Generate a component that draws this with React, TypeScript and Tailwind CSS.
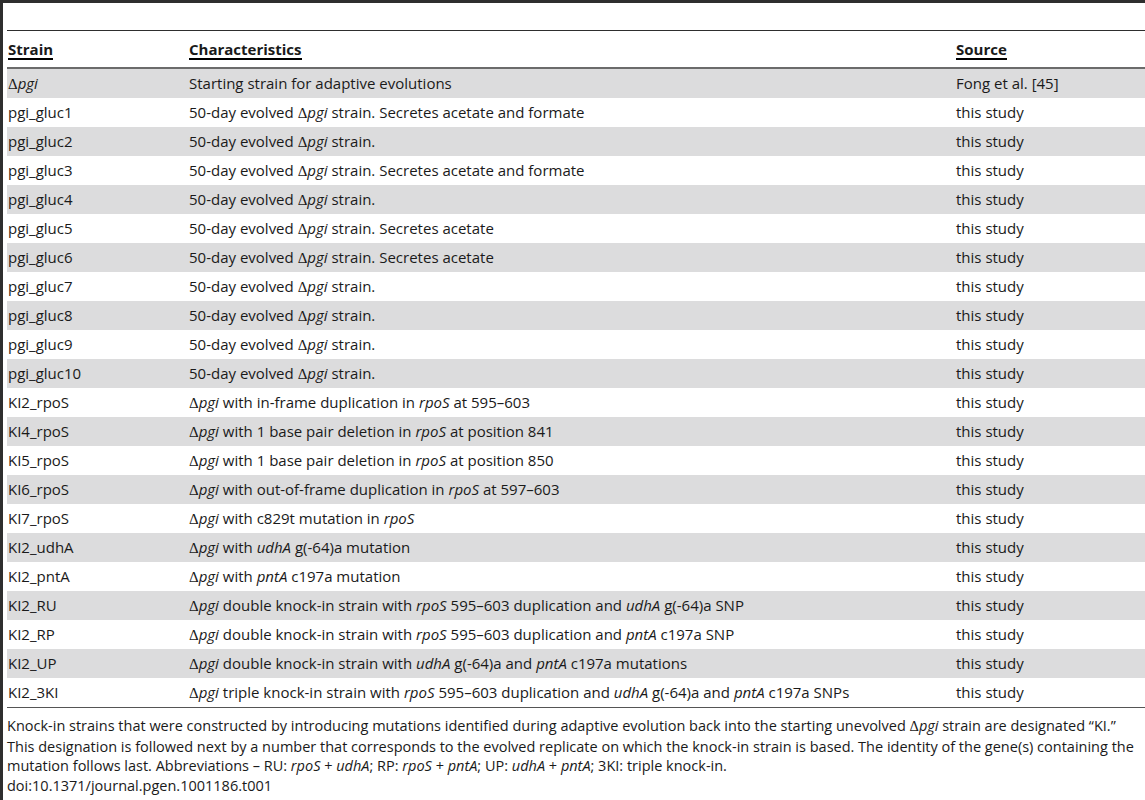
import type { ReactNode } from 'react';

const D = () => <span style={{ fontFamily: '"Liberation Serif", serif' }}>Δ</span>;
const Pgi = () => (
  <>
    <D />
    <i>pgi</i>
  </>
);

type Row = { strain: ReactNode; text: ReactNode; source: string };

const evolved = (extra?: string) => (
  <>
    50-day evolved <Pgi /> strain.{extra ? ` ${extra}` : ''}
  </>
);

const rows: Row[] = [
  { strain: <Pgi />, text: 'Starting strain for adaptive evolutions', source: 'Fong et al. [45]' },
  { strain: 'pgi_gluc1', text: evolved('Secretes acetate and formate'), source: 'this study' },
  { strain: 'pgi_gluc2', text: evolved(), source: 'this study' },
  { strain: 'pgi_gluc3', text: evolved('Secretes acetate and formate'), source: 'this study' },
  { strain: 'pgi_gluc4', text: evolved(), source: 'this study' },
  { strain: 'pgi_gluc5', text: evolved('Secretes acetate'), source: 'this study' },
  { strain: 'pgi_gluc6', text: evolved('Secretes acetate'), source: 'this study' },
  { strain: 'pgi_gluc7', text: evolved(), source: 'this study' },
  { strain: 'pgi_gluc8', text: evolved(), source: 'this study' },
  { strain: 'pgi_gluc9', text: evolved(), source: 'this study' },
  { strain: 'pgi_gluc10', text: evolved(), source: 'this study' },
  {
    strain: 'KI2_rpoS',
    text: (
      <>
        <Pgi /> with in-frame duplication in <i>rpoS</i> at 595–603
      </>
    ),
    source: 'this study',
  },
  {
    strain: 'KI4_rpoS',
    text: (
      <>
        <Pgi /> with 1 base pair deletion in <i>rpoS</i> at position 841
      </>
    ),
    source: 'this study',
  },
  {
    strain: 'KI5_rpoS',
    text: (
      <>
        <Pgi /> with 1 base pair deletion in <i>rpoS</i> at position 850
      </>
    ),
    source: 'this study',
  },
  {
    strain: 'KI6_rpoS',
    text: (
      <>
        <Pgi /> with out-of-frame duplication in <i>rpoS</i> at 597–603
      </>
    ),
    source: 'this study',
  },
  {
    strain: 'KI7_rpoS',
    text: (
      <>
        <Pgi /> with c829t mutation in <i>rpoS</i>
      </>
    ),
    source: 'this study',
  },
  {
    strain: 'KI2_udhA',
    text: (
      <>
        <Pgi /> with <i>udhA</i> g(-64)a mutation
      </>
    ),
    source: 'this study',
  },
  {
    strain: 'KI2_pntA',
    text: (
      <>
        <Pgi /> with <i>pntA</i> c197a mutation
      </>
    ),
    source: 'this study',
  },
  {
    strain: 'KI2_RU',
    text: (
      <>
        <Pgi /> double knock-in strain with <i>rpoS</i> 595–603 duplication and <i>udhA</i> g(-64)a SNP
      </>
    ),
    source: 'this study',
  },
  {
    strain: 'KI2_RP',
    text: (
      <>
        <Pgi /> double knock-in strain with <i>rpoS</i> 595–603 duplication and <i>pntA</i> c197a SNP
      </>
    ),
    source: 'this study',
  },
  {
    strain: 'KI2_UP',
    text: (
      <>
        <Pgi /> double knock-in strain with <i>udhA</i> g(-64)a and <i>pntA</i> c197a mutations
      </>
    ),
    source: 'this study',
  },
  {
    strain: 'KI2_3KI',
    text: (
      <>
        <Pgi /> triple knock-in strain with <i>rpoS</i> 595–603 duplication and <i>udhA</i> g(-64)a and{' '}
        <i>pntA</i> c197a SNPs
      </>
    ),
    source: 'this study',
  },
];

export default function App() {
  return (
    <div
      className="w-[1145px] h-[800px] bg-white text-[#1a1a1a] text-[15px] border-l-[3px] border-t-[3px] border-[#2e2e2e] overflow-hidden"
      style={{ fontFamily: '"Open Sans", sans-serif' }}
    >
      <div className="pl-[4px]">
        {/* Header */}
        <div className="mt-[27px] border-t-[1.5px] border-[#2e2e2e]">
          <div className="grid grid-cols-[182px_767px_1fr] h-[38px] items-end pb-[7px] border-b-2 border-[#6b6b6b] font-bold">
            <div className="pl-[1px]">
              <span className="border-b-2 border-black leading-[18px] inline-block">Strain</span>
            </div>
            <div>
              <span className="border-b-2 border-black leading-[18px] inline-block">Characteristics</span>
            </div>
            <div>
              <span className="border-b-2 border-black leading-[18px] inline-block">Source</span>
            </div>
          </div>
        </div>

        {/* Rows */}
        <div className="border-b border-[#555] mb-[1px]">
          {rows.map((r, i) => (
            <div
              key={i}
              className={`grid grid-cols-[182px_767px_1fr] h-[29px] items-center whitespace-nowrap ${
                i % 2 === 0 ? 'bg-[#dcdcdd]' : 'bg-white'
              }`}
            >
              <div className="pl-[1px]">{r.strain}</div>
              <div>{r.text}</div>
              <div>{r.source}</div>
            </div>
          ))}
        </div>

        {/* Footnote */}
        <div className="pt-[7px] text-[14.5px] leading-[19.5px] whitespace-nowrap">
          <div>
            Knock-in strains that were constructed by introducing mutations identified during adaptive evolution back
            into the starting unevolved <Pgi /> strain are designated “KI.”
          </div>
          <div>
            This designation is followed next by a number that corresponds to the evolved replicate on which the
            knock-in strain is based. The identity of the gene(s) containing the
          </div>
          <div>
            mutation follows last. Abbreviations – RU: <i>rpoS</i> + <i>udhA</i>; RP: <i>rpoS</i> + <i>pntA</i>; UP:{' '}
            <i>udhA</i> + <i>pntA</i>; 3KI: triple knock-in.
          </div>
          <div>doi:10.1371/journal.pgen.1001186.t001</div>
        </div>
      </div>
    </div>
  );
}
